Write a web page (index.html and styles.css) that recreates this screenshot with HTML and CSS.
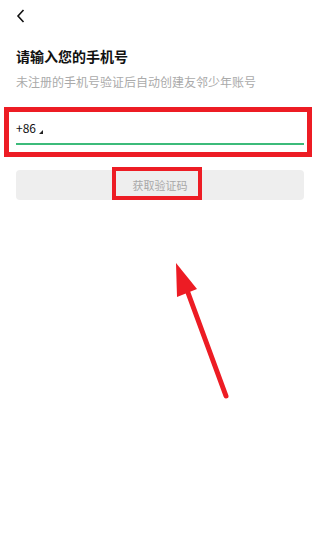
FILE: index.html
```html
<!DOCTYPE html>
<html>
<head>
<meta charset="utf-8">
<title>手机号登录</title>
<link rel="stylesheet" href="styles.css">
</head>
<body>

<div id="wrap">

	<!-- start:nav -->
	<div class="nav">
		<svg class="back" width="10" height="14" viewBox="0 0 10 14"><path d="M7.5 1 L2 7 L7.5 13" fill="none" stroke="#111" stroke-width="1.6"/></svg>
	</div>
	<!-- end:nav -->

	<h1 class="title">请输入您的手机号</h1>
	<p class="sub">未注册的手机号验证后自动创建友邻少年账号</p>

	<div class="mark phone_box">
		<div class="phone_row">
			<span class="code">+86</span><span class="corner"></span>
		</div>
		<div class="line"></div>
	</div>

	<div class="btn">
		<span class="btn_text">获取验证码</span>
		<span class="mark btn_mark"></span>
	</div>

	<svg class="arrow" width="320" height="554" viewBox="0 0 320 554">
		<line x1="226" y1="396" x2="187" y2="290" stroke="#ed1c24" stroke-width="5" stroke-linecap="round"/>
		<polygon points="176,263 177,297 197,289" fill="#ed1c24"/>
	</svg>

</div>
<!-- end:wrap -->

</body>
</html>
```

FILE: styles.css
```css
body,div,h1,p,span {margin:0; padding:0;}
body {background: #fff; font-family: "Noto Sans CJK SC", "Noto Sans", sans-serif; color: #111;}
#wrap {width: 320px; height: 554px; position: relative; overflow: hidden;}
/* ---------- nav ---------- */
.nav {height: 32px; padding: 9px 0 0 16px; box-sizing: border-box;}
.back {display: block;}
/* ---------- text ---------- */
.title {font-size: 14px; font-weight: bold; line-height: 20px; margin: 14px 0 0 16px; color: #111;}
.sub {font-size: 12px; line-height: 16px; margin: 8px 0 0 16px; color: #aaa;}
/* ---------- phone ---------- */
.mark {border: 5px solid #ed1c24;}
.phone_box {margin: 17px 8px 0 4px; padding: 5px 3px 0 7px; height: 35px;}
.phone_row {height: 22px; display: flex; align-items: center;}
.code {font-size: 12px; line-height: 22px; color: #111;}
.corner {width: 0; height: 0; border-left: 4px solid transparent; border-bottom: 4px solid #222; margin: 7px 0 0 3px;}
.line {height: 2px; background: #3cbb7a; margin-top: 4px;}
/* ---------- button ---------- */
.btn {position: relative; margin: 13px 16px 0 16px; height: 30px; background: #eeeeee; border-radius: 4px; display: flex; align-items: center; justify-content: center;}
.btn_text {font-size: 11px; color: #a8a8a8; line-height: 30px;}
.btn_mark {position: absolute; left: 96px; top: -3px; width: 82px; height: 25px; border-width: 4px;}
/* ---------- annotation ---------- */
.arrow {position: absolute; left: 0; top: 0;}
```
